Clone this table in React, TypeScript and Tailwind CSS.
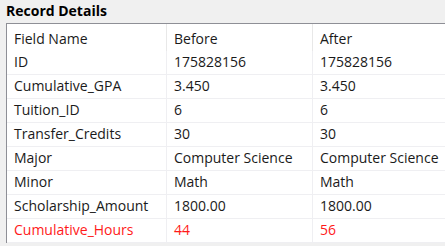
import React from 'react';

interface Row {
  field: string;
  before: string;
  after: string;
  changed?: boolean;
}

const rows: Row[] = [
  { field: 'ID', before: '175828156', after: '175828156' },
  { field: 'Cumulative_GPA', before: '3.450', after: '3.450' },
  { field: 'Tuition_ID', before: '6', after: '6' },
  { field: 'Transfer_Credits', before: '30', after: '30' },
  { field: 'Major', before: 'Computer Science', after: 'Computer Science' },
  { field: 'Minor', before: 'Math', after: 'Math' },
  { field: 'Scholarship_Amount', before: '1800.00', after: '1800.00' },
  { field: 'Cumulative_Hours', before: '44', after: '56', changed: true },
];

export default function App() {
  return (
    <div
      className="w-[445px] h-[246px] overflow-hidden bg-[#f0f0f0] text-[#1a1a1a]"
      style={{ fontFamily: '"Open Sans", "Noto Sans", sans-serif' }}
    >
      {/* Group title */}
      <div className="h-[23px] pl-[6px] pt-[1px] text-[14px] font-bold leading-[20px] text-black">Record Details</div>

      {/* Grid */}
      <div className="ml-[6px] w-[460px] border-t border-l border-[#8e8f96] bg-white text-[14px]">
        <div className="grid grid-cols-[160px_146px_1fr] h-[27px]">
          <div className="pl-[7px] pt-[5px] leading-[20px] border-r border-[#e8e8e8]">Field Name</div>
          <div className="pl-[7px] pt-[5px] leading-[20px] border-r border-[#e8e8e8]">Before</div>
          <div className="pl-[7px] pt-[5px] leading-[20px]">After</div>
        </div>
        {rows.map((r) => (
          <div
            key={r.field}
            className={`grid grid-cols-[160px_146px_1fr] h-[24px] border-b border-[#efeff2] ${r.changed ? 'text-[#ff1a1a]' : ''}`}
          >
            <div className="pl-[7px] pt-[1px] leading-[20px] border-r border-[#efeff2]">{r.field}</div>
            <div className="pl-[7px] pt-[1px] leading-[20px] border-r border-[#efeff2]">{r.before}</div>
            <div className="pl-[7px] pt-[1px] leading-[20px] whitespace-nowrap">{r.after}</div>
          </div>
        ))}
      </div>
    </div>
  );
}
